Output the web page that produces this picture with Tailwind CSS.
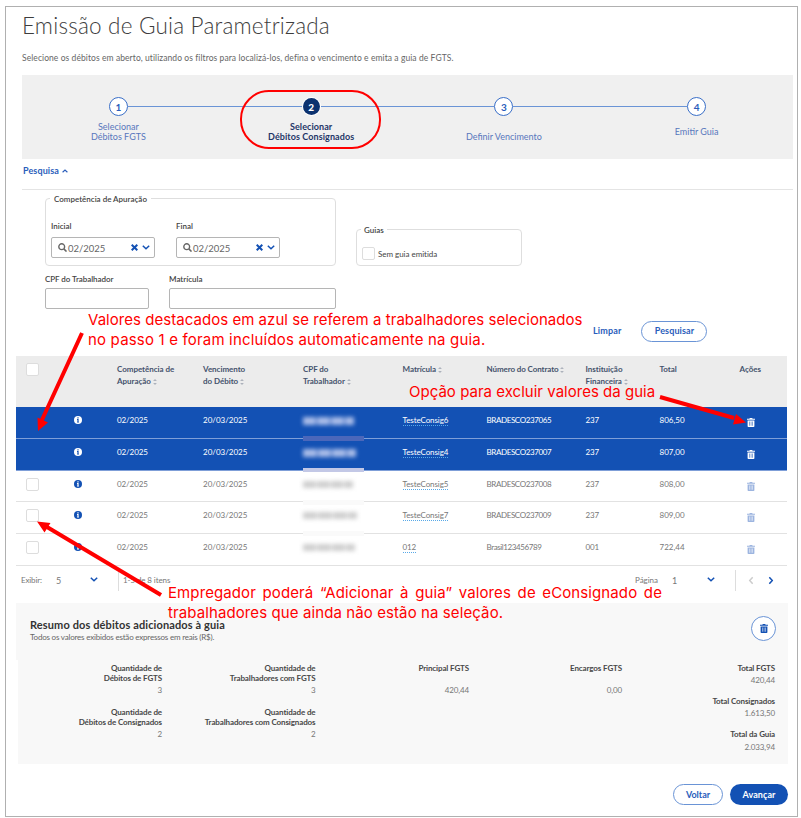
<!DOCTYPE html>
<html lang="pt-BR">
<head>
<meta charset="utf-8">
<title>Emissão de Guia Parametrizada</title>
<script src="https://cdn.jsdelivr.net/npm/@tailwindcss/browser@4"></script>
</head>
<body class="bg-white">
<svg class="hidden">
  <symbol id="trash" viewBox="0 0 8 9"><path d="M0 .8h2.4L2.8 0h2.4l.4.8H8v1H0zM.6 2.4h6.8V8.2q0 .8-.8.8H1.4Q.6 9 .6 8.200zM2.300 3.500v4.300h.5V3.500zm1.500 0v4.300h.5V3.500zm1.500 0v4.300h.5V3.500z" fill="currentColor" fill-rule="evenodd"/></symbol>
  <symbol id="info" viewBox="0 0 8 8"><circle cx="4" cy="4" r="4" fill="currentColor"/><path d="M3.400 1.300h1.200v1.100H3.400zM3 3.100h1.600v2.700H5v.8H3v-.8h.4V3.900H3z" fill="var(--i)"/></symbol>
  <symbol id="down" viewBox="0 0 8 5"><path d="M.8.800 4 3.800 7.200.8" fill="none" stroke="currentColor" stroke-width="1.500"/></symbol>
  <symbol id="sort" viewBox="0 0 4 7"><path d="M.8 2.900 2 1.700l1.200 1.200M.8 5.100 2 6.300l1.200-1.200" fill="none" stroke="currentColor" stroke-width=".6"/></symbol>
  <symbol id="search" viewBox="0 0 8 8"><circle cx="3.300" cy="3.300" r="2.600" fill="none" stroke="currentColor" stroke-width="1.200"/><path d="m5.200 5.200 2.400 2.400" stroke="currentColor" stroke-width="1.400"/></symbol>
  <symbol id="x" viewBox="0 0 6 6"><path d="m.6.600 4.800 4.800m0-4.800L.6 5.400" stroke="currentColor" stroke-width="1.700"/></symbol>
</svg>

<div class="relative w-[801px] h-[818px] overflow-hidden pl-[5px] pt-[6px] font-[Lato,'Open_Sans',sans-serif] text-[8px] text-[#666]">
 <main class="w-[793px] h-[811px] border border-[#b0b0b0] pl-[10px]">
  <header class="pl-[6px] h-[68px]">
    <h1 class="pt-[5px] text-[22.500px] leading-[28px] font-light tracking-[0.2px] text-[#3d3d3d] whitespace-nowrap">Emissão de Guia Parametrizada</h1>
    <p class="mt-[13px] text-[8.5px] leading-[10px] tracking-[0.08px] whitespace-nowrap">Selecione os débitos em aberto, utilizando os filtros para localizá-los, defina o vencimento e emita a guia de FGTS.</p>
  </header>

  <ol class="ml-[6px] w-[771px] h-[84px] bg-[#f0f0f0] grid grid-cols-4 pt-[22px] text-[9px] leading-[10px] text-center text-[#5877bd]">
    <li class="flex flex-col items-center">
      <div class="flex items-center self-stretch"><i class="flex-1"></i><b class="size-[19px] rounded-full border-[1.5px] border-[#3a6fc8] bg-white flex items-center justify-center text-[10px] text-[#2a5dbb]">1</b><i class="flex-1 h-px bg-[#6a94d6]"></i></div>
      <span class="mt-[6px]">Selecionar<br>Débitos FGTS</span>
    </li>
    <li class="flex flex-col items-center text-[#1f3667] font-bold">
      <div class="flex items-center self-stretch"><i class="flex-1 h-px bg-[#6a94d6]"></i><b class="mx-px size-[17px] rounded-full bg-[#0c326f] ring-1 ring-white flex items-center justify-center text-[10px] font-black text-white my-px">2</b><i class="flex-1 h-px bg-[#6a94d6]"></i></div>
      <span class="mt-[6px] tracking-[0.08px]">Selecionar<br>Débitos Consignados</span>
    </li>
    <li class="flex flex-col items-center">
      <div class="flex items-center self-stretch"><i class="flex-1 h-px bg-[#6a94d6]"></i><b class="size-[19px] rounded-full border-[1.5px] border-[#3a6fc8] bg-white flex items-center justify-center text-[10px] text-[#2a5dbb]">3</b><i class="flex-1 h-px bg-[#6a94d6]"></i></div>
      <span class="mt-[16px]">Definir Vencimento</span>
    </li>
    <li class="flex flex-col items-center">
      <div class="flex items-center self-stretch"><i class="flex-1 h-px bg-[#6a94d6]"></i><b class="size-[19px] rounded-full border-[1.5px] border-[#3a6fc8] bg-white flex items-center justify-center text-[10px] text-[#2a5dbb]">4</b><i class="flex-1"></i></div>
      <span class="mt-[11px]">Emitir Guia</span>
    </li>
  </ol>

  <div class="ml-[6px] w-[771px] h-[31px] border-b border-[#e4e4e4] pt-[7px] pl-px flex items-start gap-[3px] text-[9px] leading-[10px] font-bold text-[#2a5dbb] tracking-[0.1px]">Pesquisa <svg class="w-[6px] h-[4px] mt-[3px] rotate-180"><use href="#down"/></svg></div>

  <section class="h-[166px] flex pt-[8px] pl-[29px] text-[#444] leading-[10px]">
    <div class="w-[291px]">
      <div class="h-[68px] border border-[#dedede] rounded-[4px] pl-[5px]">
        <div class="-mt-[5px] ml-[-1px] w-fit bg-white px-[4px] text-[8px] font-semibold whitespace-nowrap">Competência de Apuração</div>
        <div class="flex gap-[21px] mt-[17px]">
          <label class="w-[104px]"><span class="text-[8px] font-semibold">Inicial</span>
            <span class="mt-[6px] h-[21px] border border-[#b5b5b5] rounded-[2px] flex items-center pl-[6px] pr-[4px] text-[9.500px] text-[#666]"><svg class="size-[9px] mr-[1px]"><use href="#search"/></svg><span class="translate-y-px">02/2025</span><svg class="ml-auto size-[7px] text-[#1351b4]"><use href="#x"/></svg><svg class="ml-[4px] w-[8px] h-[5px] text-[#1351b4]"><use href="#down"/></svg></span></label>
          <label class="w-[104px]"><span class="text-[8px] font-semibold">Final</span>
            <span class="mt-[6px] h-[21px] border border-[#b5b5b5] rounded-[2px] flex items-center pl-[6px] pr-[4px] text-[9.500px] text-[#666]"><svg class="size-[9px] mr-[1px]"><use href="#search"/></svg><span class="translate-y-px">02/2025</span><svg class="ml-auto size-[7px] text-[#1351b4]"><use href="#x"/></svg><svg class="ml-[4px] w-[8px] h-[5px] text-[#1351b4]"><use href="#down"/></svg></span></label>
        </div>
      </div>
      <div class="flex gap-[20px] mt-[8px] font-semibold">
        <label class="w-[104px] tracking-[-0.05px]">CPF do Trabalhador<span class="block mt-[4px] h-[21px] border border-[#b5b5b5] rounded-[2px]"></span></label>
        <label class="w-[167px]">Matrícula<span class="block mt-[4px] h-[21px] border border-[#b5b5b5] rounded-[2px]"></span></label>
      </div>
    </div>
    <div class="ml-[20px] mt-[31px] w-[166px] h-[37px] border border-[#dedede] rounded-[4px] pl-[5px]">
      <div class="-mt-[5px] ml-[-1px] w-fit bg-white px-[3px] font-semibold">Guias</div>
      <div class="mt-[12px] flex items-center gap-[3px] leading-[12px] tracking-[-0.03px]"><i class="size-[13px] border border-[#ddd] rounded-[2px]"></i>Sem guia emitida</div>
    </div>
    <div class="ml-[71px] mt-[122px] h-[22px] flex items-center gap-[20px] text-[9px] font-bold text-[#2a5dbb]"><span class="tracking-[0.15px]">Limpar</span><span class="w-[66px] h-[21px] rounded-full border border-[#6a94d6] flex items-center justify-center tracking-[0.1px]">Pesquisar</span></div>
  </section>

  <section class="w-[771px]">
    <div class="h-[51px] bg-[#ececec] flex pt-[7px] text-[8px] leading-[12px] font-bold text-[#45536d] tracking-[-0.04px]">
      <div class="w-[101px] pl-[10px]"><i class="block size-[13px] bg-white border border-[#ddd] rounded-[2px]"></i></div>
      <div class="w-[86px]">Competência de<br>Apuração <svg class="inline w-[4px] h-[7px]"><use href="#sort"/></svg></div>
      <div class="w-[100px]">Vencimento<br>do Débito <svg class="inline w-[4px] h-[7px]"><use href="#sort"/></svg></div>
      <div class="w-[99.500px]">CPF do<br>Trabalhador <svg class="inline w-[4px] h-[7px]"><use href="#sort"/></svg></div>
      <div class="w-[84px]">Matrícula <svg class="inline w-[4px] h-[7px]"><use href="#sort"/></svg></div>
      <div class="w-[99px] whitespace-nowrap tracking-[-0.1px]">Número do Contrato <svg class="inline w-[4px] h-[7px]"><use href="#sort"/></svg></div>
      <div class="w-[74px]">Instituição<br>Financeira <svg class="inline w-[4px] h-[7px]"><use href="#sort"/></svg></div>
      <div class="w-[80px]">Total</div>
      <div>Ações</div>
    </div>
    <div id="rows"></div>
    <div class="h-[37px] flex pt-[4px] leading-[21px] text-[#777]">
      <span class="w-[35px] pl-[5px] tracking-[-0.15px]">Exibir:</span><span class="w-[39px] pl-[5px] text-[9px]">5</span>
      <svg class="w-[8px] h-[5px] mt-[7px] mr-[20px] text-[#1351b4]"><use href="#down"/></svg>
      <span class="h-[21px] border-l border-[#ddd] pl-[4px] w-[517px] tracking-[-0.1px]">1-5 de 8 itens</span>
      <span class="w-[37px] tracking-[-0.05px]">Página</span><span class="w-[35px] text-[9px]">1</span>
      <svg class="w-[8px] h-[5px] mt-[7px] mr-[20px] text-[#1351b4]"><use href="#down"/></svg>
      <span class="h-[21px] border-l border-[#ddd] w-[12px]"></span>
      <svg class="w-[8px] h-[5px] mt-[8px] text-[#ccc] rotate-90"><use href="#down"/></svg>
      <svg class="w-[8px] h-[5px] mt-[8px] ml-[12px] text-[#1351b4] -rotate-90"><use href="#down"/></svg>
    </div>
  </section>

  <section class="w-[772px]">
    <div class="h-[57px] bg-[#f8f8f8] flex justify-between pl-[14px] pr-[12px] pt-[13px]">
      <div><h2 class="mt-[2px] text-[11px] leading-[13px] font-bold tracking-[0.12px] text-[#333] whitespace-nowrap">Resumo dos débitos adicionados à guia</h2><p class="mt-[2px] leading-[9px] tracking-[-0.2px]">Todos os valores exibidos estão expressos em reais (R$).</p></div>
      <span class="size-[25px] rounded-full border border-[#6a94d6] bg-white flex items-center justify-center text-[#1351b4]"><svg class="w-[8px] h-[9px]"><use href="#trash"/></svg></span>
    </div>
    <div class="ml-[2px] h-[104px] bg-[#f8f8f8] flex text-right leading-[10px] text-[8px] pt-[3px] text-[#777] tracking-[-0.12px]">
      <div class="w-[144px]"><b class="text-[#484848]">Quantidade de<br>Débitos de FGTS</b><p class="mt-[2px]">3</p><div class="mt-[12px]"><b class="text-[#484848]">Quantidade de<br>Débitos de Consignados</b><p class="mt-[2px]">2</p></div></div>
      <div class="w-[153.500px]"><b class="text-[#484848]">Quantidade de<br>Trabalhadores com FGTS</b><p class="mt-[2px]">3</p><div class="mt-[12px]"><b class="text-[#484848]">Quantidade de<br>Trabalhadores com Consignados</b><p class="mt-[2px]">2</p></div></div>
      <div class="w-[153.500px]"><b class="text-[#484848]">Principal FGTS</b><p class="mt-[12px]">420,44</p></div>
      <div class="w-[153px]"><b class="text-[#484848]">Encargos FGTS</b><p class="mt-[12px]">0,00</p></div>
      <div class="w-[153px]"><b class="text-[#484848]">Total FGTS</b><p class="mt-[2px]">420,44</p><p class="mt-[11px] font-bold text-[#484848]">Total Consignados</p><p class="mt-[2px]">1.613,50</p><p class="mt-[11px] font-bold text-[#484848]">Total da Guia</p><p class="mt-[3px]">2.033,94</p></div>
    </div>
    <div class="mt-[20px] flex justify-end gap-[7px] text-[9px] font-bold"><span class="w-[50px] h-[21px] rounded-full border border-[#6a94d6] text-[#2a5dbb] flex items-center justify-center">Voltar</span><span class="w-[58px] h-[21px] rounded-full bg-[#1351b4] text-white flex items-center justify-center tracking-[0.1px]">Avançar</span></div>
  </section>
 </main>

 <!-- Callouts over the screen -->
 <svg class="absolute z-20 left-0 top-0 w-[801px] h-[818px]" fill="none" stroke="#f00">
   <rect x="241" y="91" width="139" height="57" rx="28" stroke-width="2"/>
   <path d="M82 333 41 422M660 397l74 21M161 595 47 527" stroke-width="4"/>
   <path d="M38 431l-.5-13.500 10.500 5zM746 422.500l-13 2 3-10.500zM37 521.500l13.500 1.500-6 9.500z" fill="#f00" stroke="none"/>
 </svg>
 <div class="absolute z-20 left-[88px] top-[310px] font-[Inter,sans-serif] text-[15px] leading-[20px] text-[#f00] whitespace-nowrap"><p class="tracking-[0.04px]">Valores destacados em azul se referem a trabalhadores selecionados</p><p class="tracking-[0.18px]">no passo 1 e foram incluídos automaticamente na guia.</p></div>
 <div class="absolute z-20 left-[409px] top-[382px] font-[Inter,sans-serif] text-[15px] leading-[20px] tracking-[0.02px] text-[#f00] whitespace-nowrap">Opção para excluir valores da guia</div>
 <div class="absolute z-20 left-[168px] top-[583px] w-[494px] font-[Inter,sans-serif] text-[15px] leading-[20px] tracking-[0.1px] text-[#f00]"><p class="[text-align-last:justify] whitespace-nowrap">Empregador poderá “Adicionar à guia” valores de eConsignado de</p><p class="whitespace-nowrap">trabalhadores que ainda não estão na seleção.</p></div>
</div>

<script>
const data = [
  ['TesteConsig6','BRADESCO237065','237','806,50',1,51],
  ['TesteConsig4','BRADESCO237007','237','807,00',1,53],
  ['TesteConsig5','BRADESCO237008','237','808,00',0,50],
  ['TesteConsig7','BRADESCO237009','237','809,00',0,54],
  ['012','Brasil123456789','001','722,44',0,52]
];
document.getElementById('rows').innerHTML = data.map(([m,c,b,t,on,w],i) => `
<div class="${on ? 'h-[31.800px] flex pt-[8px] leading-[10px] bg-[#1351b4] text-white border-b border-[#7f9fd8] [--i:#1351b4]' : 'h-[31.800px] flex pt-[8px] leading-[10px] text-[#777] border-b border-[#e2e2e2] [--i:#fff]'}">
  <div class="w-[57.500px] pl-[10px]">${on ? '' : '<i class="block size-[13px] -mt-px border border-[#ddd] rounded-[2px]"></i>'}</div>
  <div class="w-[43.500px]"><svg class="${on ? 'size-[8px] mt-px text-white' : 'size-[8px] mt-px text-[#1351b4]'}"><use href="#info"/></svg></div>
  <div class="w-[86px] tracking-[-0.1px]">02/2025</div>
  <div class="w-[100px] tracking-[0px]">20/03/2025</div>
  <div class="w-[99.500px]"><span class="${on ? 'flex gap-[1px] h-[8px] mt-[2px] blur-[2px]' : 'flex gap-[1px] h-[7px] mt-[2px] blur-[2px]'}" style="width:${w}px">${[3,3,3,2].map(n => `<i class="${on ? 'h-full bg-[#a9bce8]' : 'h-full bg-[#cfcfcf]'}" style="flex:${n}"></i>`).join('')}</span>
    ${i < 4 ? `<i class="${i==0 ? 'relative z-10 block w-[61px] h-[5px] mt-[11px] bg-[#4b67ba]' : i==1 ? 'relative z-10 block w-[61px] h-[4px] mt-[11px] bg-[#c3c8e6]' : 'relative z-10 block w-[61px] h-[5px] mt-[12px] bg-[#fafafa]'}"></i>` : ''}</div>
  <div class="w-[84px]"><span class="border-b border-dotted border-[#58a9e8] tracking-[-0.1px]">${m}</span></div>
  <div class="w-[99px] tracking-[-0.4px]"><span class="${i == 4 ? 'tracking-[-0.4px]' : 'tracking-[-0.38px]'}">${c}</span></div><div class="w-[74px] tracking-[-0.2px]">${b}</div><div class="w-[87px]">${t}</div>
  <svg class="${on ? 'w-[8px] h-[9px] mt-[3px] text-white' : 'w-[8px] h-[9px] mt-[3px] text-[#9db5e0]'}"><use href="#trash"/></svg>
</div>`).join('');
</script>
</body>
</html>
